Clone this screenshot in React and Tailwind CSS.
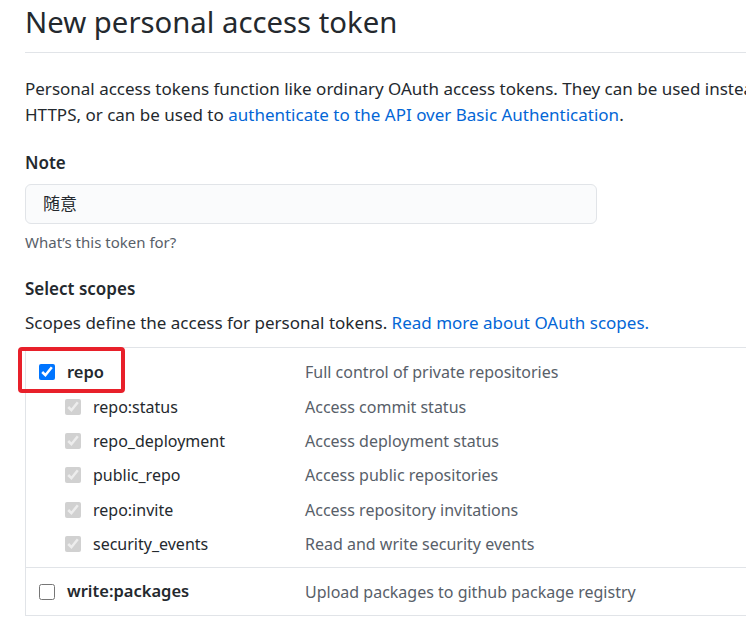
export default function App() {
  const subScopes = [
    ["repo:status", "Access commit status"],
    ["repo_deployment", "Access deployment status"],
    ["public_repo", "Access public repositories"],
    ["repo:invite", "Access repository invitations"],
    ["security_events", "Read and write security events"],
  ]

  return (
    <div
      className="w-[746px] h-[627px] overflow-hidden bg-white text-[#24292e]"
      style={{ fontFamily: '"Noto Sans", "Noto Sans CJK SC", sans-serif' }}
    >
      <div className="pl-[25px] w-[1100px]">
        <h1 className="pt-[2px] pb-[10px] border-b border-[#e1e4e8] text-[29.3px] leading-[40px] font-normal w-[800px]">
          New personal access token
        </h1>

        <p className="mt-[23px] text-[17px] leading-[26px] whitespace-nowrap">
          Personal access tokens function like ordinary OAuth access tokens. They can be used instead of a password for Git over
          <br />
          HTTPS, or can be used to{" "}
          <a className="text-[#0366d6]" href="#">authenticate to the API over Basic Authentication</a>.
        </p>

        <div className="mt-[22px] text-[17px] leading-[26px] font-semibold">Note</div>
        <div className="mt-[8px] w-[572px] h-[40px] rounded-[6px] border border-[#e1e4e8] bg-[#fafbfc] px-[17px] flex items-center text-[17px]">
          随意
        </div>
        <div className="mt-[7px] text-[15px] leading-[22px] text-[#586069]">What’s this token for?</div>

        <div className="mt-[23px] text-[17px] leading-[26px] font-semibold">Select scopes</div>
        <p className="mt-[8px] text-[17px] leading-[26px] whitespace-nowrap">
          Scopes define the access for personal tokens.{" "}
          <a className="text-[#0366d6]" href="#">Read more about OAuth scopes.</a>
        </p>

        <div className="relative mt-[11px] w-[900px] border-t border-l border-[#e1e4e8] text-[16px]">
          <div className="pt-[7px] pb-[6px] border-b border-[#e1e4e8]">
            <div className="flex items-center h-[34.4px]">
              <label className="w-[279px] flex items-center pl-[13px] gap-[12px] font-semibold text-[16.5px]">
                <input type="checkbox" defaultChecked className="w-4 h-4 m-0" />
                repo
              </label>
              <span className="text-[#586069]">Full control of private repositories</span>
            </div>
            {subScopes.map(([name, desc]) => (
              <div key={name} className="flex items-center h-[34.4px]">
                <label className="w-[279px] flex items-center pl-[39px] gap-[12px]">
                  <input type="checkbox" defaultChecked disabled className="w-4 h-4 m-0" />
                  {name}
                </label>
                <span className="text-[#586069]">{desc}</span>
              </div>
            ))}
          </div>
          <div className="flex items-center h-[48px] border-b border-[#e1e4e8]">
            <label className="w-[279px] flex items-center pl-[13px] gap-[12px] font-semibold text-[16.5px]">
              <input type="checkbox" className="w-4 h-4 m-0" />
              write:packages
            </label>
            <span className="text-[#586069]">Upload packages to github package registry</span>
          </div>

          {/* red highlight around repo */}
          <div className="absolute left-[-8px] top-[-1px] w-[107px] h-[46px] border-[4px] border-[#e8202a] rounded-[4px] pointer-events-none" />
        </div>
      </div>
    </div>
  )
}
